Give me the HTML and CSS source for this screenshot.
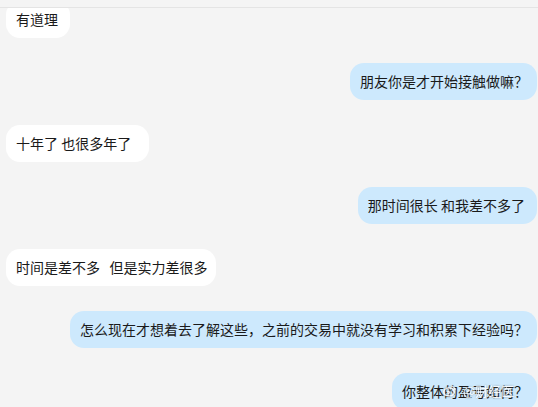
FILE: index.html
```html
<!DOCTYPE html>
<html lang="zh-CN">
<head>
  <meta charset="UTF-8" />
  <title>聊天记录</title>
  <link rel="stylesheet" href="styles.css">
</head>
<body>
  <div class="topbar"></div>

  <div class="chat">
    <div class="msg left">有道理</div>
    <div class="msg right q">朋友你是才开始接触做嘛？</div>
    <div class="msg left">十年了 也很多年了&nbsp;&nbsp;</div>
    <div class="msg right">那时间很长 和我差不多了</div>
    <div class="msg left narrow">时间是差不多&nbsp;&nbsp; 但是实力差很多</div>
    <div class="msg right q">怎么现在才想着去了解这些，之前的交易中就没有学习和积累下经验吗？</div>
    <div class="msg right q last">
      你整体的盈亏如何？
      <span class="watermark">
        <svg width="13" height="12" viewBox="0 0 13 12">
          <ellipse cx="6" cy="7" rx="5.2" ry="4" fill="none" stroke="#fff" stroke-width="1.6"/>
          <circle cx="5.5" cy="7.3" r="1.6" fill="#fff"/>
          <path d="M8.5 1.5 A3.5 3.5 0 0 1 12 5" fill="none" stroke="#fff" stroke-width="1.2"/>
        </svg>
        <span class="wm-text">@财经医</span>
      </span>
    </div>
  </div>
</body>
</html>
```

FILE: styles.css
```css
body {
  margin: 0;
  background: #f4f4f4;
  font-family: "Noto Sans CJK SC", "Noto Sans", sans-serif;
  color: #1a1a1a;
  overflow: hidden;
}

.topbar {
  position: fixed;
  top: 0;
  left: 0;
  right: 0;
  height: 7px;
  background: #f4f4f4;
  border-bottom: 1px solid #e4e4e4;
  z-index: 2;
}

.chat {
  display: flex;
  flex-direction: column;
  gap: 25px;
  padding: 1px 1px 0 6px;
}

.msg {
  padding: 9px 12px 9px 10px;
  line-height: 19px;
  font-size: 14px;
  border-radius: 14px;
  white-space: nowrap;
}

.msg.q {
  padding-right: 9px;
}

.msg.narrow {
  padding-right: 9px;
}

.msg.left {
  align-self: flex-start;
  background: #fff;
}

.msg.right {
  align-self: flex-end;
  background: #cde9fd;
}

.msg.last {
  position: relative;
}

.watermark {
  position: absolute;
  left: 51px;
  top: 10px;
  display: flex;
  align-items: center;
  gap: 1px;
  opacity: 0.85;
  filter: drop-shadow(0 0 1px rgba(90, 90, 90, 0.6));
}

.wm-text {
  color: #fff;
  font-size: 13px;
  line-height: 16px;
  padding-left: 6px;
}
```
